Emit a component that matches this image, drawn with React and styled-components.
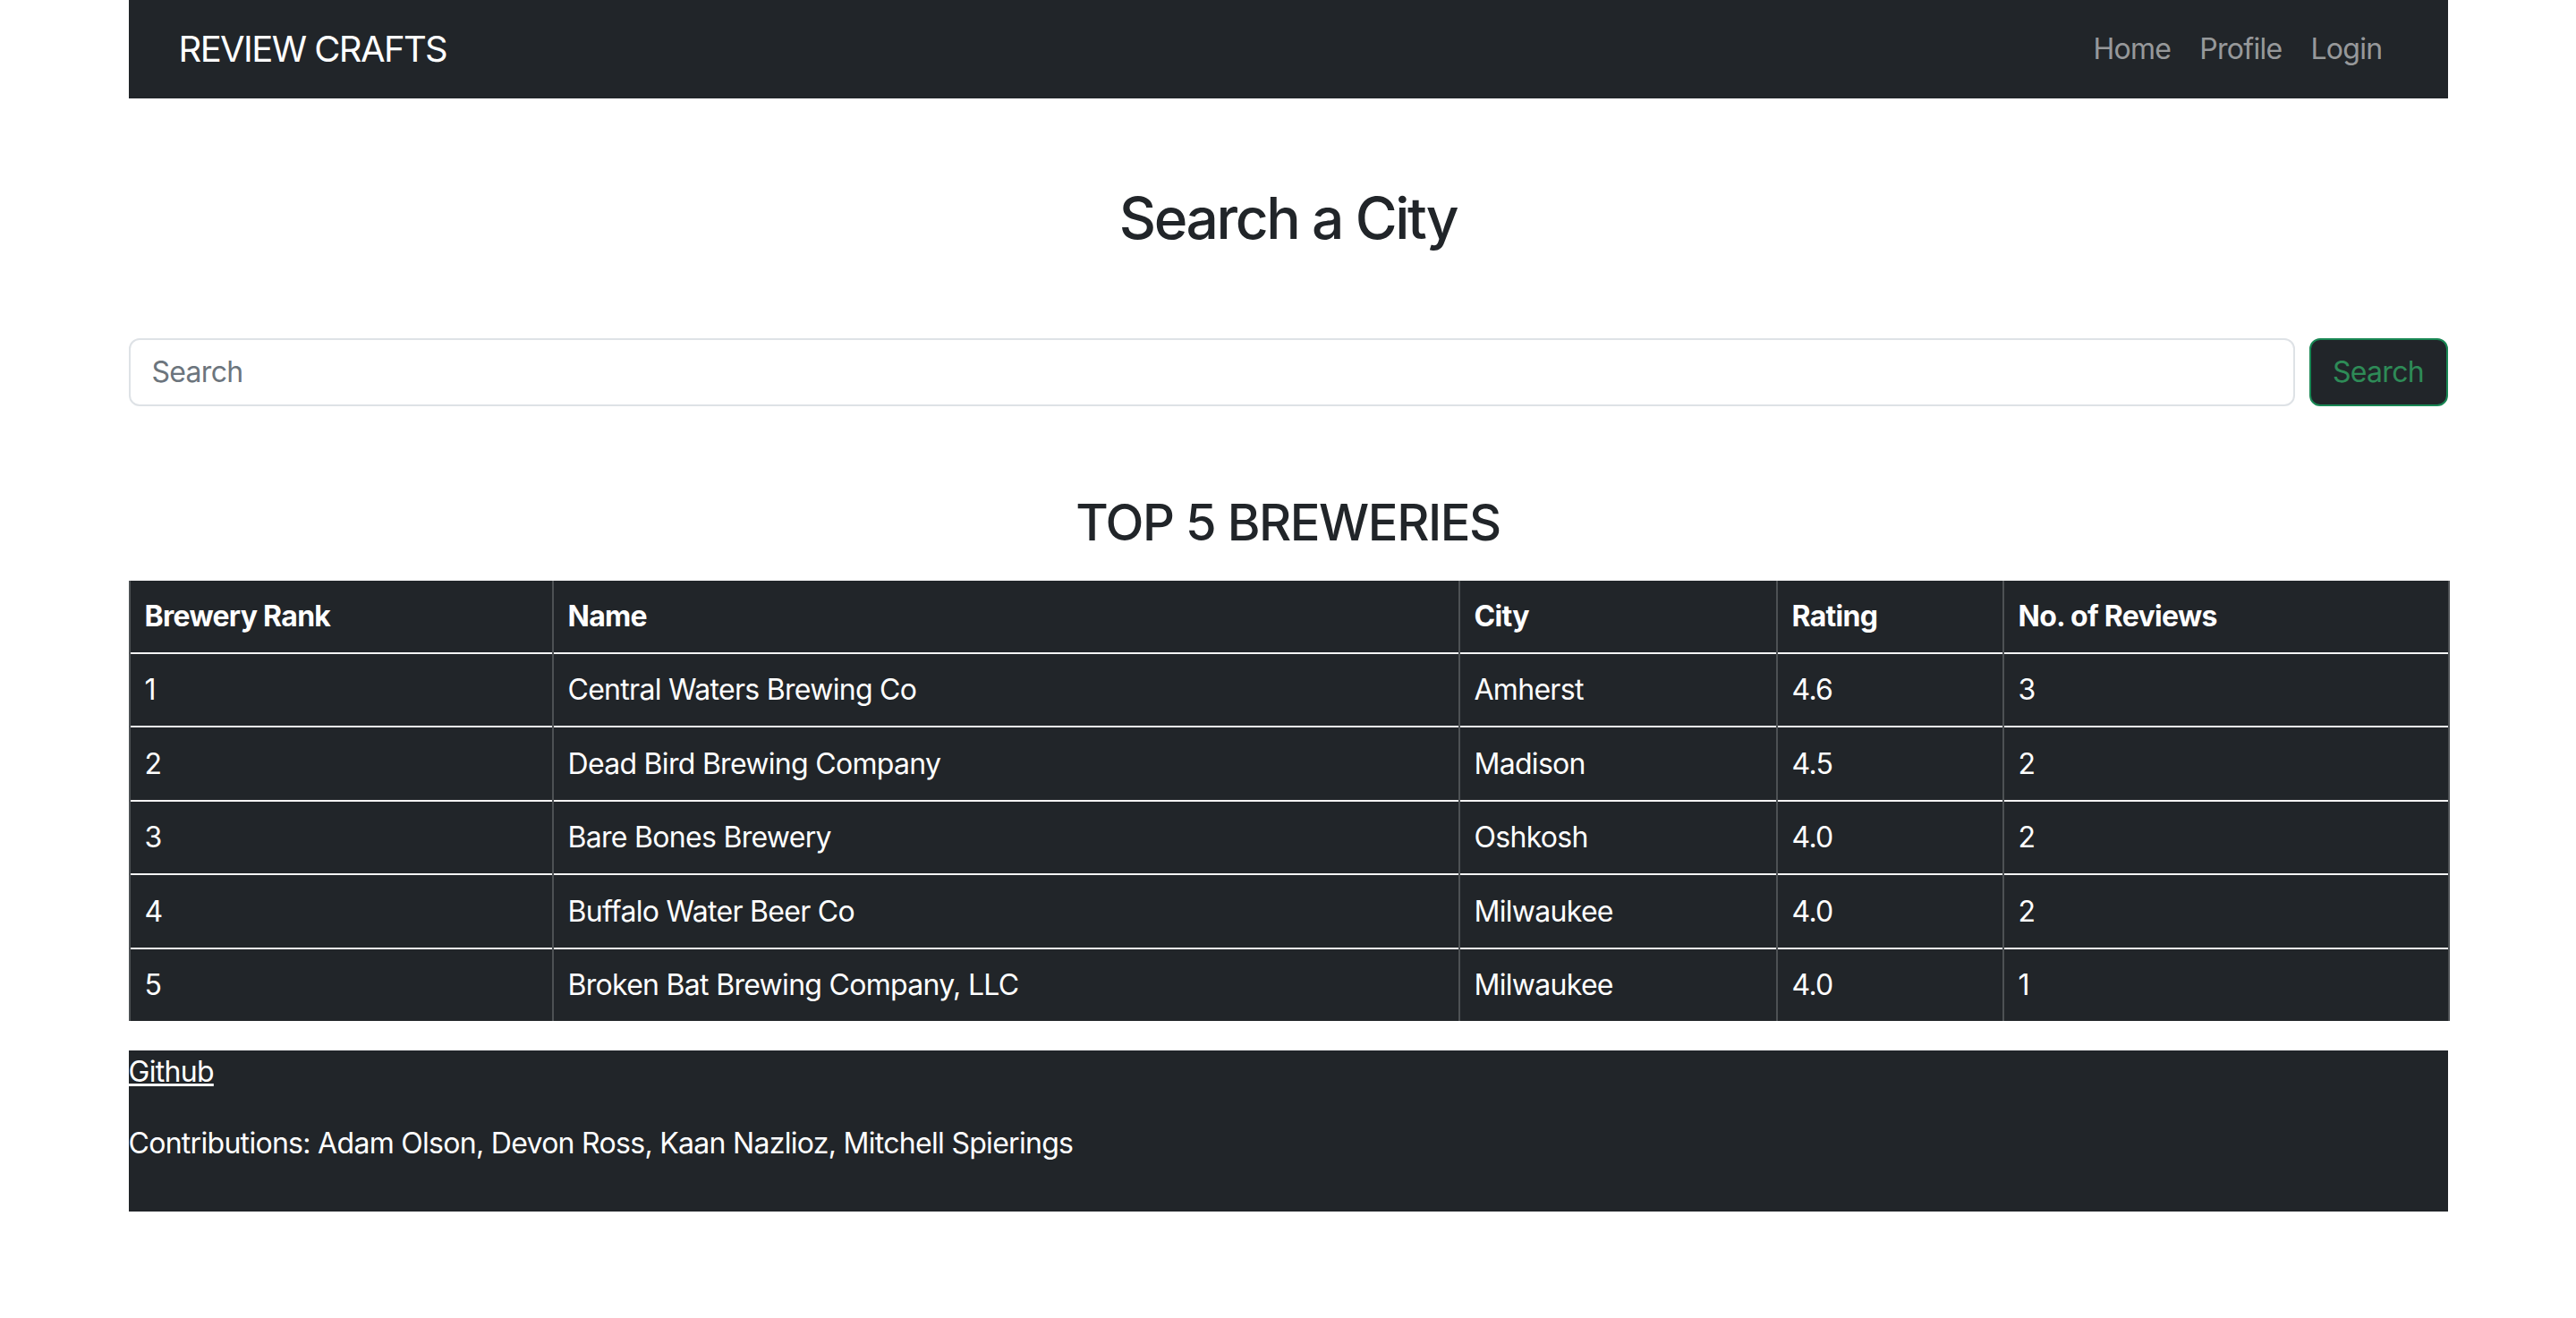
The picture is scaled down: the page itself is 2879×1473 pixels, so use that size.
import React from 'react';
import styled, { createGlobalStyle } from 'styled-components';

const GlobalStyle = createGlobalStyle`
  body {
    margin: 0;
    background: #fff;
    color: #212529;
    font-family: Inter, "Liberation Sans", sans-serif;
    font-size: 32px;
    line-height: 1.5;
    letter-spacing: -0.022em;
  }
  * { box-sizing: border-box; }
`;

const Page = styled.div`
  width: 2592px;
  margin: 0 auto;
`;

const Navbar = styled.nav`
  height: 110px;
  background: #212529;
  display: flex;
  align-items: center;
  justify-content: space-between;
  padding: 0 57px 0 56px;
`;

const Brand = styled.a`
  color: #fff;
  font-size: 40px;
  letter-spacing: -0.04em;
  text-decoration: none;
`;

const NavLinks = styled.div`
  display: flex;
`;

const NavLink = styled.a`
  color: rgba(255, 255, 255, 0.55);
  font-size: 32px;
  padding: 0 16px;
  text-decoration: none;
`;

const Title = styled.h2`
  margin: 96px 0 0;
  font-size: 64px;
  font-weight: 500;
  line-height: 1.2;
  letter-spacing: -0.037em;
  text-align: center;
`;

const SearchForm = styled.form`
  display: flex;
  gap: 16px;
  margin-top: 95px;
`;

const SearchInput = styled.input`
  flex: 1;
  height: 76px;
  border: 2px solid #dee2e6;
  border-radius: 12px;
  padding: 0 24px;
  font: inherit;
  letter-spacing: inherit;
  color: #212529;
  &::placeholder { color: #6c757d; }
`;

const SearchButton = styled.button`
  width: 155px;
  height: 76px;
  background: #212529;
  border: 2px solid #198754;
  border-radius: 12px;
  color: #2e8b57;
  font: inherit;
  letter-spacing: inherit;
`;

const SubTitle = styled.h3`
  margin: 97px 0 31px;
  font-size: 56px;
  font-weight: 500;
  line-height: 1.2;
  letter-spacing: -0.026em;
  text-align: center;
`;

const Table = styled.table`
  width: 100%;
  border-collapse: collapse;
  background: #212529;
  color: #fff;
  table-layout: fixed;
`;

const Col = styled.col`
  width: ${p => p.w}px;
`;

const Row = styled.tr`
  border-bottom: ${p => (p.last ? 'none' : '2px solid #f4f4f4')};
`;

const HeadCell = styled.th`
  text-align: left;
  font-weight: 700;
  padding: 16px;
  line-height: 48px;
  border-left: 2px solid #4d5154;
  border-right: 2px solid #4d5154;
`;

const Cell = styled.td`
  padding: 16.5px 16px 16px;
  line-height: 48px;
  border-left: 2px solid #4d5154;
  border-right: 2px solid #4d5154;
`;

const Footer = styled.footer`
  margin-top: 33px;
  background: #212529;
  color: #fff;
  padding-bottom: 20px;
`;

const FooterText = styled.p`
  margin: 0 0 32px;
`;

const FooterLink = styled.a`
  color: #fff;
  text-decoration: underline;
`;

const columns = [
  { label: 'Brewery Rank', w: 473 },
  { label: 'Name', w: 1013 },
  { label: 'City', w: 355 },
  { label: 'Rating', w: 253 },
  { label: 'No. of Reviews', w: 498 },
];

const breweries = [
  [1, 'Central Waters Brewing Co', 'Amherst', '4.6', 3],
  [2, 'Dead Bird Brewing Company', 'Madison', '4.5', 2],
  [3, 'Bare Bones Brewery', 'Oshkosh', '4.0', 2],
  [4, 'Buffalo Water Beer Co', 'Milwaukee', '4.0', 2],
  [5, 'Broken Bat Brewing Company, LLC', 'Milwaukee', '4.0', 1],
];

const App = () => {
  return (
    <Page>
      <GlobalStyle />
      <Navbar>
        <Brand href="#">REVIEW CRAFTS</Brand>
        <NavLinks>
          <NavLink href="#">Home</NavLink>
          <NavLink href="#">Profile</NavLink>
          <NavLink href="#">Login</NavLink>
        </NavLinks>
      </Navbar>

      <Title>Search a City</Title>

      <SearchForm onSubmit={e => e.preventDefault()}>
        <SearchInput type="search" placeholder="Search" />
        <SearchButton type="submit">Search</SearchButton>
      </SearchForm>

      <SubTitle>TOP 5 BREWERIES</SubTitle>

      <Table>
        <colgroup>
          {columns.map(c => <Col key={c.label} w={c.w} />)}
        </colgroup>
        <thead>
          <Row>
            {columns.map(c => <HeadCell key={c.label}>{c.label}</HeadCell>)}
          </Row>
        </thead>
        <tbody>
          {breweries.map((row, r) => (
            <Row key={row[0]} last={r === breweries.length - 1}>
              {row.map((v, i) => <Cell key={i}>{v}</Cell>)}
            </Row>
          ))}
        </tbody>
      </Table>

      <Footer>
        <FooterText>
          <FooterLink href="#">Github</FooterLink>
        </FooterText>
        <FooterText>
          Contributions: Adam Olson, Devon Ross, Kaan Nazlioz, Mitchell Spierings
        </FooterText>
      </Footer>
    </Page>
  );
};

export default App;
